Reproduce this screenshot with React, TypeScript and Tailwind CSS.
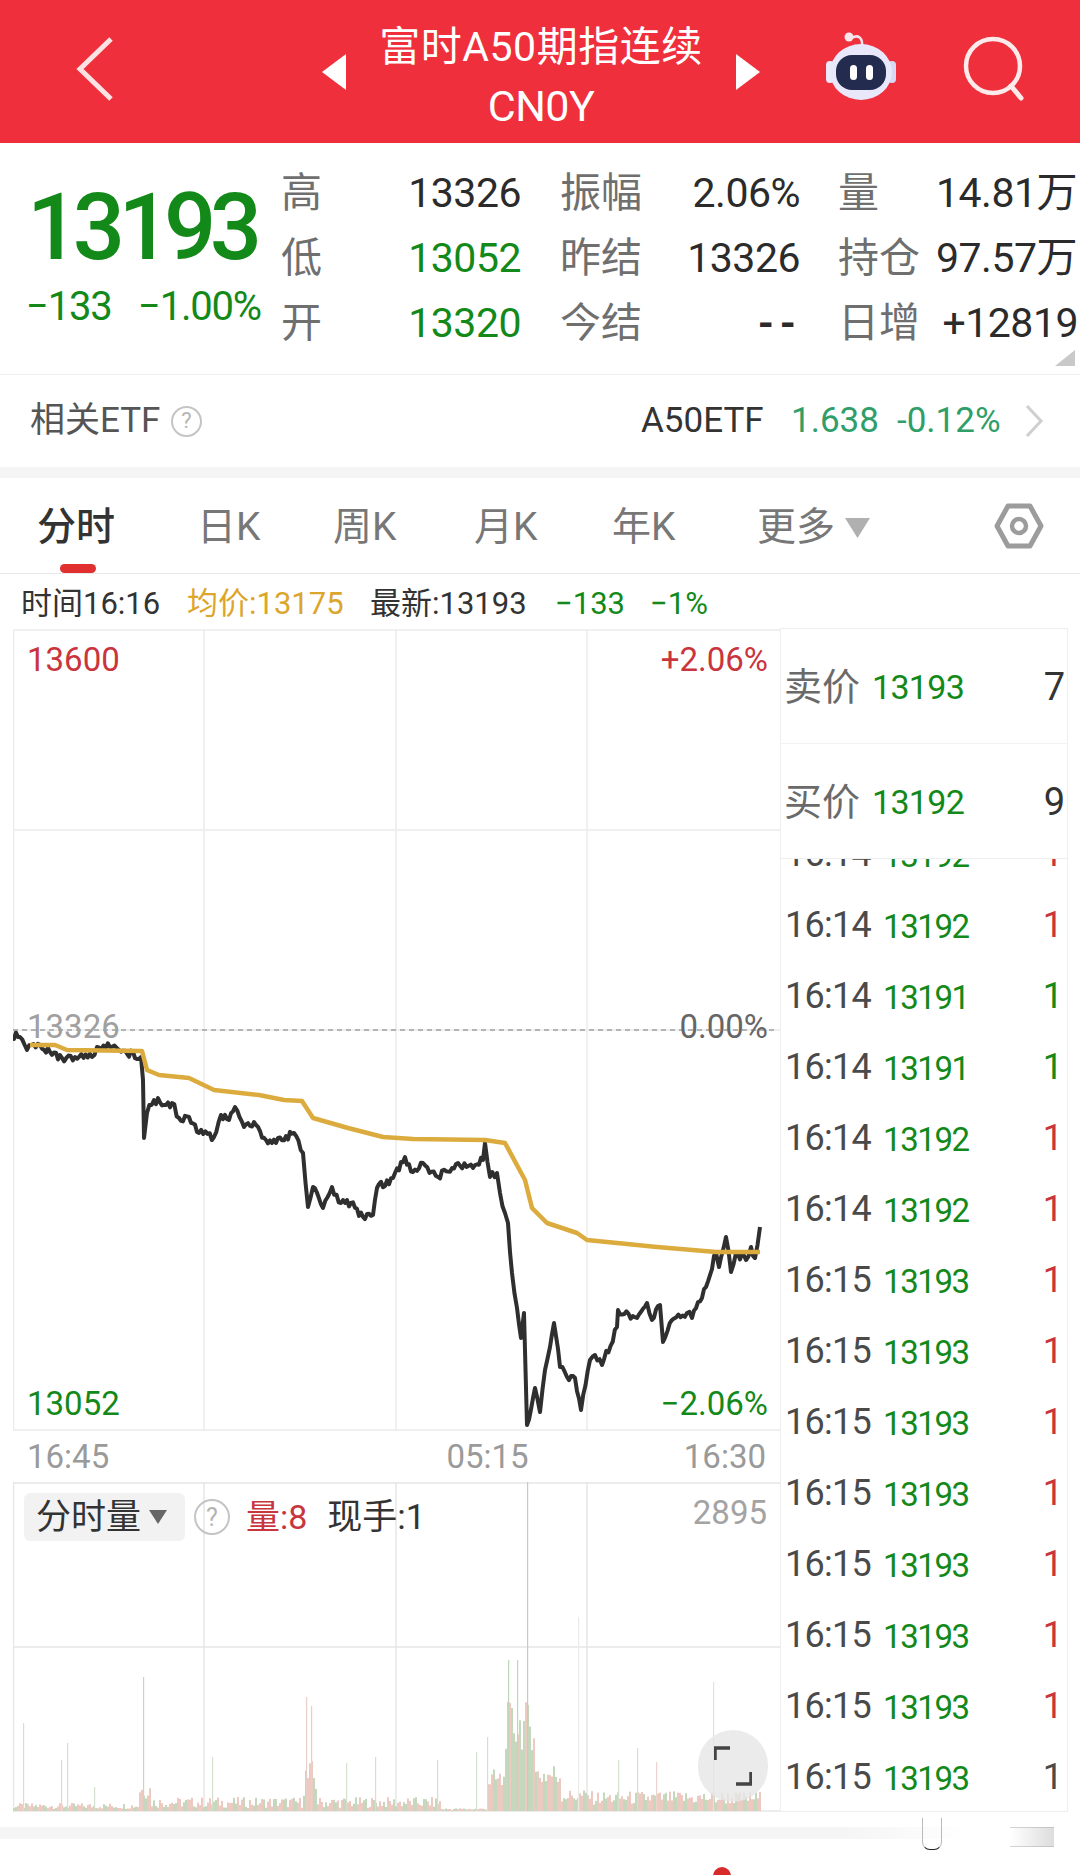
import type { ReactNode } from 'react';

const GREEN = 'text-[#13891a]';
const RED = 'text-[#c9353c]';

// anchor points read off the reference, in page pixels
const PRICE: number[][] = [
  [12, 1035], [20, 1037], [27, 1050], [40, 1045], [50, 1052], [62, 1058], [75, 1057], [92, 1057], [97, 1047], [110, 1047],
  [119, 1050], [141, 1057], [143, 1080], [144, 1138], [147, 1113], [154, 1100], [164, 1105], [172, 1103], [179, 1118], [189, 1117],
  [199, 1133], [214, 1137], [221, 1115], [229, 1120], [235, 1107], [244, 1127], [256, 1125], [266, 1140], [276, 1143], [294, 1133],
  [303, 1153], [308, 1207], [313, 1187], [323, 1208], [332, 1187], [341, 1203], [351, 1203], [363, 1217], [373, 1215], [377, 1188],
  [393, 1178], [405, 1157], [413, 1172], [423, 1163], [438, 1177], [458, 1163], [473, 1168], [483, 1160], [485, 1143], [490, 1177],
  [497, 1173], [500, 1193], [505, 1213], [508, 1223], [512, 1273], [517, 1308], [521, 1338], [524, 1313], [527, 1425], [535, 1388],
  [540, 1412], [545, 1370], [550, 1347], [554, 1323], [560, 1367], [567, 1377], [575, 1378], [581, 1410], [590, 1360], [595, 1355],
  [602, 1365], [617, 1327], [618, 1310], [637, 1318], [647, 1303], [652, 1320], [660, 1305], [663, 1342], [672, 1320], [687, 1313],
  [692, 1318], [706, 1287], [716, 1253], [719, 1267], [726, 1237], [731, 1272], [736, 1253], [746, 1260], [751, 1247], [755, 1258], [760, 1227],
];

const AVERAGE: number[][] = [
  [30, 1045], [55, 1045], [67, 1050], [142, 1051], [147, 1070], [159, 1075], [189, 1078], [214, 1090], [259, 1095], [284, 1100],
  [302, 1101], [313, 1118], [348, 1128], [383, 1137], [413, 1139], [485, 1140], [505, 1143], [525, 1180], [532, 1208], [547, 1223],
  [577, 1233], [587, 1240], [657, 1247], [716, 1252], [760, 1252],
];

// thin spikes on the volume chart: x, top y, colour
const SPIKES: [number, number, string][] = [
  [23, 1723, '#ecd5cf'], [61, 1760, '#ecd5cf'], [67, 1743, '#d3e0cd'], [94, 1787, '#d3e0cd'], [143, 1677, '#c5d8bd'],
  [212, 1757, '#d3e0cd'], [306, 1697, '#e8cfc8'], [311, 1706, '#e8cfc8'], [346, 1763, '#d3e0cd'], [375, 1757, '#ecd5cf'],
  [437, 1760, '#d3e0cd'], [476, 1752, '#d3e0cd'], [487, 1737, '#d3e0cd'], [508, 1660, '#c0d6b8'], [517, 1660, '#c0d6b8'],
  [527, 1482, '#bcd3b3'], [578, 1617, '#eeeae8'], [618, 1760, '#d3e0cd'], [637, 1748, '#d3e0cd'], [656, 1762, '#ecd5cf'], [713, 1682, '#e2e2de'],
];

function noise(i: number) {
  const v = Math.sin(i * 12.9898) * 43758.5453;
  return v - Math.floor(v);
}

function smoothPath(points: number[][]) {
  return points.map((p, i) => `${i ? 'L' : 'M'}${p[0] - 13} ${p[1] - 629}`).join(' ');
}

// adds the small zigzag a tick line has between the anchor points
function jaggedPath(points: number[][]) {
  const out: number[][] = [];
  points.forEach((p, i) => {
    out.push(p);
    const next = points[i + 1];
    if (!next) return;
    const steps = Math.floor((next[0] - p[0]) / 2);
    for (let s = 1; s < steps; s++) {
      const t = s / steps;
      out.push([p[0] + (next[0] - p[0]) * t, p[1] + (next[1] - p[1]) * t + (noise(i * 31 + s) - 0.5) * 8]);
    }
  });
  return smoothPath(out);
}

function volumeHeight(x: number, i: number) {
  const n = noise(i + 7);
  if (x < 138) return 2 + n * 6;
  if (x < 150) return 12 + n * 18;
  if (x < 302) return 3 + n * 11;
  if (x < 316) return 12 + n * 40;
  if (x < 440) return 3 + n * 11;
  if (x < 486) return 1 + n * 2;
  if (x < 505) return 18 + n * 25;
  if (x < 535) return 60 + n * 50;
  if (x < 560) return 22 + n * 28;
  if (x < 590) return 8 + n * 14;
  return 6 + n * 14;
}

const VOLUME_BARS = Array.from({ length: 374 }, (_, i) => {
  const x = 13 + i * 2;
  const isGreen = x > 505 && x < 535 ? i % 4 !== 0 : i % 5 < 2;
  return { x, h: volumeHeight(x, i), color: isGreen ? '#c5d8bd' : '#ecc9c1' };
});

const TICKS: [string, string, string][] = [
  ['16:14', '13192', RED],
  ['16:14', '13192', RED],
  ['16:14', '13191', GREEN],
  ['16:14', '13191', GREEN],
  ['16:14', '13192', RED],
  ['16:14', '13192', RED],
  ['16:15', '13193', RED],
  ['16:15', '13193', RED],
  ['16:15', '13193', RED],
  ['16:15', '13193', RED],
  ['16:15', '13193', RED],
  ['16:15', '13193', RED],
  ['16:15', '13193', RED],
  ['16:15', '13193', 'text-[#4a4a4a]'],
];

function RobotIcon() {
  return (
    <svg width="78" height="72" viewBox="0 0 78 72">
      <path d="M30 7 C36 3 41 7 40 15" fill="none" stroke="#f3e4ea" strokeWidth="2.5" />
      <circle cx="27" cy="6" r="4.5" fill="#f8e6ec" />
      <rect x="4" y="30" width="8" height="22" rx="4" fill="#eceaf8" />
      <rect x="66" y="30" width="8" height="22" rx="4" fill="#d9d8f4" />
      <ellipse cx="39" cy="41" rx="31" ry="28" fill="#e9e8fb" />
      <rect x="14" y="24" width="50" height="35" rx="16" fill="#232c4e" />
      <rect x="28" y="34" width="7" height="15" rx="3.5" fill="#ffffff" />
      <rect x="44" y="34" width="7" height="15" rx="3.5" fill="#ffffff" />
    </svg>
  );
}

function HelpIcon({ size, text }: { size: number; text: string }) {
  return (
    <span
      className={`flex items-center justify-center rounded-full border-2 border-[#c4c4c4] text-[#b5b5b5] leading-none ${text}`}
      style={{ width: size, height: size }}
    >
      ?
    </span>
  );
}

function StatCell({ label, value, color = 'text-[#2b2b2b]', className }: { label: string; value: ReactNode; color?: string; className: string }) {
  return (
    <div className={`flex items-center justify-between ${className}`}>
      <span className="text-[#6f6f6f]">{label}</span>
      <span className={`whitespace-nowrap tracking-[-0.5px] ${color}`}>{value}</span>
    </div>
  );
}

function Tab({ children, className }: { children: ReactNode; className: string }) {
  return <span className={`whitespace-nowrap text-[39px] leading-none text-[#777] ${className}`}>{children}</span>;
}

export default function App() {
  return (
    <div className="w-[1080px] h-[1875px] overflow-hidden bg-white font-['Roboto','Noto_Sans_CJK_SC',sans-serif]">
      {/* Title bar */}
      <header className="h-[143px] bg-[#ef303c] flex items-center text-white">
        <svg className="ml-[76px] shrink-0 -mt-[5px]" width="38" height="66" viewBox="0 0 38 66">
          <path d="M35 3 L4 33 L35 63" fill="none" stroke="#fbe3e3" strokeWidth="5" />
        </svg>
        <svg className="ml-[208px] shrink-0" width="24" height="36" viewBox="0 0 24 36">
          <path d="M24 0 V36 L0 18 Z" fill="#fff" />
        </svg>
        <div className="w-[390px] flex flex-col items-center pt-[10px]">
          <span className="text-[41px] leading-[48px] tracking-[0.5px] whitespace-nowrap">富时A50期指连续</span>
          <span className="text-[43px] leading-[48px] mt-[11px] tracking-[-0.5px]">CN0Y</span>
        </div>
        <svg className="shrink-0" width="24" height="36" viewBox="0 0 24 36">
          <path d="M0 0 V36 L24 18 Z" fill="#fff" />
        </svg>
        <div className="ml-[62px] shrink-0 -mt-[10px]">
          <RobotIcon />
        </div>
        <svg className="ml-[63px] shrink-0 -mt-[6px]" width="64" height="66" viewBox="0 0 64 66">
          <circle cx="30" cy="30" r="27" fill="none" stroke="#fdeaea" strokeWidth="4.5" />
          <path d="M48 50 L58 62" stroke="#fdeaea" strokeWidth="5" strokeLinecap="round" />
        </svg>
      </header>

      {/* Quote summary */}
      <section className="relative h-[232px] border-b border-[#eeeeee] flex">
        <div className="w-[281px] shrink-0 pl-[27px] pt-[37px]">
          <div className={`text-[92px] leading-[96px] tracking-[-6.6px] font-medium ${GREEN}`}>13193</div>
          <div className={`flex text-[40px] leading-[46px] tracking-[-1.2px] mt-[8px] -ml-[1px] ${GREEN}`}>
            <span className="w-[112px]">−133</span>
            <span className="whitespace-nowrap">−1.00%</span>
          </div>
        </div>
        <div className="w-[799px] shrink-0 pt-[18px] grid grid-cols-[279px_278px_242px] auto-rows-[65px] text-[41px] leading-none">
          <StatCell className="w-[240px]" label="高" value="13326" />
          <StatCell className="w-[240px]" label="振幅" value="2.06%" />
          <StatCell className="w-[239px]" label="量" value="14.81万" />
          <StatCell className="w-[240px]" label="低" value="13052" color={GREEN} />
          <StatCell className="w-[240px]" label="昨结" value="13326" />
          <StatCell className="w-[239px]" label="持仓" value="97.57万" />
          <StatCell className="w-[240px]" label="开" value="13320" color={GREEN} />
          <StatCell className="w-[240px]" label="今结" value={<span className="tracking-[6px] font-bold mr-[-2px]">--</span>} />
          <StatCell className="w-[240px]" label="日增" value="+12819" />
        </div>
        <svg className="absolute left-[1055px] top-[207px]" width="20" height="16" viewBox="0 0 20 16">
          <path d="M20 0 V16 H0 Z" fill="#c9c9c9" />
        </svg>
      </section>

      {/* Related ETF */}
      <section className="h-[92px] flex items-center pl-[30px] text-[35px]">
        <span className="text-[#555] w-[141px] whitespace-nowrap">相关ETF</span>
        <HelpIcon size={31} text="text-[22px]" />
        <span className="ml-[439px] text-[#333] w-[150px]">A50ETF</span>
        <span className="text-[#2f9e68] w-[106px]">1.638</span>
        <span className="text-[#2f9e68] w-[127px]">-0.12%</span>
        <svg width="20" height="36" viewBox="0 0 20 36">
          <path d="M3 3 L17 18 L3 33" fill="none" stroke="#cfcfcf" strokeWidth="3" />
        </svg>
      </section>
      <div className="h-[11px] bg-[#f5f5f5]" />

      {/* Period tabs */}
      <nav className="relative h-[96px] border-b border-[#e8e8e8] flex items-center pt-[4px]">
        <Tab className="ml-[37px] !text-[#333] font-medium w-[160px]">分时</Tab>
        <Tab className="w-[136px]">日K</Tab>
        <Tab className="w-[141px]">周K</Tab>
        <Tab className="w-[138px]">月K</Tab>
        <Tab className="w-[145px]">年K</Tab>
        <Tab className="w-[88px]">更多</Tab>
        <svg width="25" height="20" viewBox="0 0 25 20">
          <path d="M0 0 H25 L12.5 20 Z" fill="#b0b0b0" />
        </svg>
        <svg className="ml-[124px] -mt-[4px]" width="50" height="46" viewBox="0 0 50 46">
          <path d="M14 3 H36 L47 23 L36 43 H14 L3 23 Z" fill="none" stroke="#9c9c9c" strokeWidth="5" strokeLinejoin="round" />
          <circle cx="25" cy="23" r="7" fill="none" stroke="#9c9c9c" strokeWidth="4.5" />
        </svg>
        <span className="absolute left-[60px] bottom-0 w-[36px] h-[9px] rounded-full bg-[#e03030]" />
      </nav>

      {/* Current point read-out */}
      <section className="h-[55px] flex items-center pl-[21px] pt-[4px] text-[31px] leading-none whitespace-nowrap">
        <span className="text-[#333] w-[166px]">时间16:16</span>
        <span className="text-[#dca52c] w-[183px]">均价:13175</span>
        <span className="text-[#333] w-[185px]">最新:13193</span>
        <span className={`w-[95px] ${GREEN}`}>−133</span>
        <span className={GREEN}>−1%</span>
      </section>

      <main className="flex">
        <div className="ml-[13px] w-[767px] shrink-0">
          {/* Price chart */}
          <div className="relative h-[802px]">
            <svg width="767" height="802" viewBox="0 0 767 802" className="block">
              <path d="M0.5 0 V802 M191 0 V802 M383 0 V802 M574 0 V802 M0 1 H767 M0 201 H767 M0 401 H767 M0 801 H767" stroke="#ececec" strokeWidth="1.5" fill="none" />
              <path d={jaggedPath(PRICE)} fill="none" stroke="#2f2f2f" strokeWidth="4" strokeLinejoin="round" />
              <path d={smoothPath(AVERAGE)} fill="none" stroke="#dcab3e" strokeWidth="4.5" strokeLinejoin="round" />
              <path d="M0 401 H761" fill="none" stroke="#a0a0a0" strokeWidth="1.5" strokeDasharray="5 4" />
            </svg>
            <span className={`absolute left-[14px] top-[14px] text-[33px] leading-none ${RED}`}>13600</span>
            <span className={`absolute right-[12px] top-[14px] text-[33px] leading-none ${RED}`}>+2.06%</span>
            <span className="absolute left-[14px] top-[381px] text-[33px] leading-none text-[#a0a0a0]">13326</span>
            <span className="absolute right-[12px] top-[381px] text-[33px] leading-none text-[#666]">0.00%</span>
            <span className={`absolute left-[14px] top-[758px] text-[33px] leading-none ${GREEN}`}>13052</span>
            <span className={`absolute right-[12px] top-[758px] text-[33px] leading-none ${GREEN}`}>−2.06%</span>
          </div>

          <div className="h-[51px] flex items-center justify-between pl-[14px] pr-[14px] text-[33px] leading-none text-[#9a9a9a]">
            <span>16:45</span>
            <span className="ml-[182px]">05:15</span>
            <span>16:30</span>
          </div>

          {/* Volume chart */}
          <div className="relative h-[330px]">
            <svg width="767" height="330" viewBox="0 0 767 330" className="block">
              <path d="M0.5 0 V330 M191 0 V330 M383 0 V330 M574 0 V330 M0 1 H767 M0 165 H767 M0 329 H767" stroke="#e6e6e6" strokeWidth="1.5" fill="none" />
              {VOLUME_BARS.map((b) => (
                <rect key={b.x} x={b.x - 13} y={329 - b.h} width="2" height={b.h} fill={b.color} />
              ))}
              {SPIKES.map(([x, top, color]) => (
                <rect key={x} x={x - 13} y={top - 1482} width="1.2" height={1811 - top} fill={color} />
              ))}
            </svg>
            <div className="absolute left-[11px] top-[11px] flex items-center">
              <div className="w-[161px] h-[48px] rounded-[6px] bg-[#f2f2f2] flex items-center pl-[12px] gap-[8px]">
                <span className="text-[35px] leading-none text-[#333]">分时量</span>
                <svg width="18" height="14" viewBox="0 0 18 14">
                  <path d="M0 0 H18 L9 14 Z" fill="#666" />
                </svg>
              </div>
              <div className="ml-[9px]">
                <HelpIcon size={36} text="text-[25px]" />
              </div>
              <span className={`ml-[16px] text-[34px] leading-none ${RED}`}>量:8</span>
              <span className="ml-[20px] text-[35px] leading-none text-[#333]">现手:1</span>
            </div>
            <span className="absolute right-[13px] top-[14px] text-[33px] leading-none text-[#a3a3a3]">2895</span>
            <div className="absolute left-[685px] top-[248px] w-[70px] h-[72px] rounded-full bg-[#e6e6e6]/80 flex items-center justify-center">
              <svg width="38" height="40" viewBox="0 0 38 40">
                <path d="M1 14 V2 H16 M37 26 V38 H22" fill="none" stroke="#444" strokeWidth="3.5" />
              </svg>
            </div>
          </div>
        </div>

        {/* Bid, ask and trade ticks */}
        <aside className="w-[288px] h-[1184px] shrink-0 border border-[#eeeeee] -mt-[1px] flex flex-col">
          <div className="h-[115px] shrink-0 border-b border-[#f2f2f2] flex items-center pl-[3px] pr-[2px] pt-[2px]">
            <span className="text-[38px] leading-none text-[#6a6a6a] w-[88px]">卖价</span>
            <span className={`text-[34px] leading-none flex-1 tracking-[-0.7px] ${GREEN}`}>13193</span>
            <span className="text-[38px] leading-none text-[#333]">7</span>
          </div>
          <div className="h-[115px] shrink-0 border-b border-[#eeeeee] flex items-center pl-[3px] pr-[2px] pt-[2px]">
            <span className="text-[38px] leading-none text-[#6a6a6a] w-[88px]">买价</span>
            <span className={`text-[34px] leading-none flex-1 tracking-[-0.7px] ${GREEN}`}>13192</span>
            <span className="text-[38px] leading-none text-[#333]">9</span>
          </div>
          <div className="flex-1 overflow-hidden">
            <div className="-mt-[41px]">
              {TICKS.map(([time, price, qtyColor], i) => (
                <div key={i} className="h-[71px] flex items-center pl-[4px] pr-[4px]">
                  <span className="w-[98px] text-[36px] leading-none tracking-[-0.7px] text-[#4a4a4a]">{time}</span>
                  <span className={`flex-1 text-[33px] leading-none tracking-[-1.4px] pt-[3px] ${GREEN}`}>{price}</span>
                  <span className={`text-[36px] leading-none ${qtyColor}`}>1</span>
                </div>
              ))}
            </div>
          </div>
        </aside>
      </main>

      {/* Page strip under the chart, with the faded watermark */}
      <footer className="relative mt-[15px] h-[12px] bg-gradient-to-r from-[#f5f5f5] from-[78%] to-[#ffffff] to-[90%]">
        <div className="absolute left-[922px] -top-[9px] w-[20px] h-[32px] rounded-b-[8px] border-x border-b border-[#777]/50 border-b-[#222]" />
        <div className="absolute left-[1010px] top-0 w-[44px] h-[20px] border-y border-[#999]/40 bg-gradient-to-r from-white to-[#dddddd]" />
        <span className="absolute left-[713px] top-[40px] w-[18px] h-[18px] rounded-full bg-[#d62c2c]" />
      </footer>
    </div>
  );
}
